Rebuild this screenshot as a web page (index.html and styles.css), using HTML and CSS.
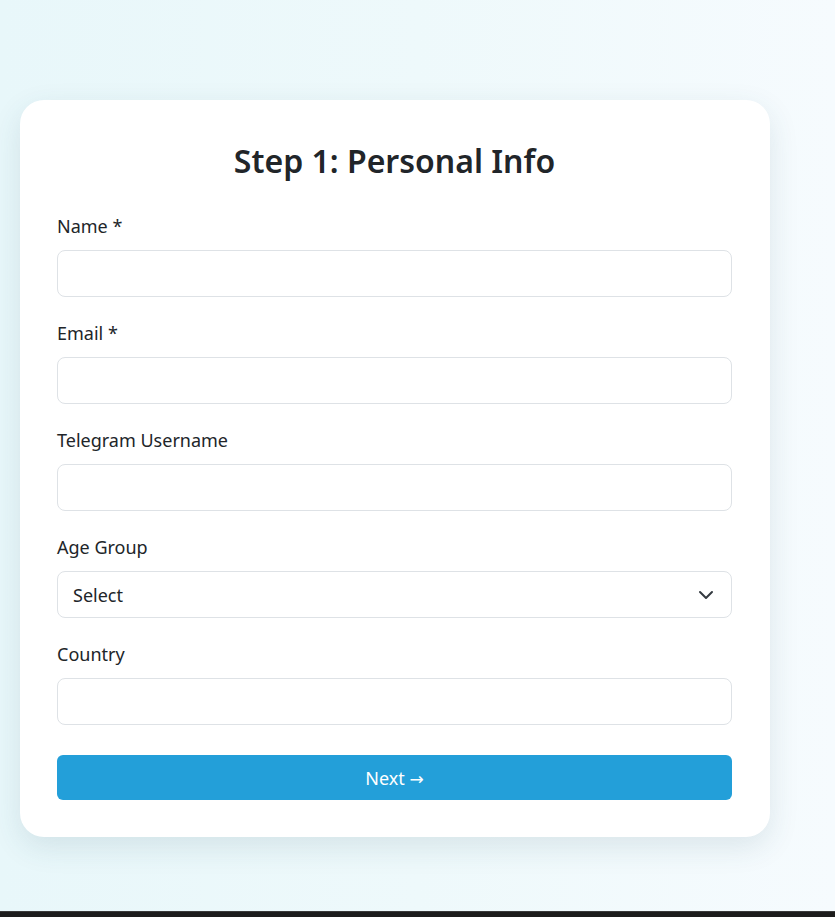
FILE: index.html
```html
<!DOCTYPE html>
<html lang="en">
<head>
<meta charset="utf-8">
<title>Step 1: Personal Info</title>
<link rel="stylesheet" href="styles.css">
</head>
<body>
<main class="page">
  <form class="card">
    <h1 class="title">Step 1: Personal Info</h1>
    <div class="field">
      <label class="label" for="name">Name *</label>
      <input class="input" id="name" type="text">
    </div>
    <div class="field">
      <label class="label" for="email">Email *</label>
      <input class="input" id="email" type="email">
    </div>
    <div class="field">
      <label class="label" for="tg">Telegram Username</label>
      <input class="input" id="tg" type="text">
    </div>
    <div class="field">
      <label class="label" for="age">Age Group</label>
      <div class="select-wrap">
        <select class="input select" id="age">
          <option>Select</option>
        </select>
        <svg class="chevron" width="16" height="16" viewBox="0 0 16 16" aria-hidden="true"><path d="M2 5l6 6 6-6" fill="none" stroke="#343a40" stroke-width="2" stroke-linecap="round" stroke-linejoin="round"/></svg>
      </div>
    </div>
    <div class="field">
      <label class="label" for="country">Country</label>
      <input class="input" id="country" type="text">
    </div>
    <button class="btn" type="button">Next <span class="arrow">→</span></button>
  </form>
</main>
<div class="taskbar"></div>
</body>
</html>
```
FILE: styles.css
```css
* { box-sizing: border-box; }
html, body { margin: 0; padding: 0; }
body {
  height: 917px;
  overflow: hidden;
  font-family: "Noto Sans", "Open Sans", sans-serif;
  color: #212529;
  background: linear-gradient(90deg, #e8f7fa 0%, #eef9fb 50%, #f6fbfe 100%);
  display: flex;
  flex-direction: column;
}
.page {
  flex: 1;
  padding: 100px 0 0 20px;
}
.card {
  width: 750px;
  background: #fff;
  border-radius: 24px;
  padding: 37px 38px 37px 37px;
  box-shadow: 0 10px 30px rgba(40, 80, 100, 0.12);
  display: flex;
  flex-direction: column;
}
.title {
  margin: 0 0 28px;
  font-size: 32px;
  line-height: 48px;
  font-weight: 600;
  text-align: center;
}
.field {
  display: flex;
  flex-direction: column;
  margin-bottom: 23px;
}
.label {
  font-size: 18px;
  line-height: 27px;
  margin-bottom: 10px;
}
.input {
  height: 47px;
  border: 1px solid #dee2e6;
  border-radius: 8px;
  padding: 0 15px;
  font: inherit;
  font-size: 18px;
  color: #212529;
  background: #fff;
  width: 100%;
}
.select-wrap { position: relative; }
.select {
  appearance: none;
  -webkit-appearance: none;
}
.chevron {
  position: absolute;
  right: 18px;
  top: 16px;
  pointer-events: none;
}
.btn {
  margin-top: 7px;
  height: 45px;
  border: 0;
  border-radius: 6px;
  background: #239fd9;
  color: #fff;
  font: inherit;
  font-size: 18px;
}
.arrow {
  font-family: "DejaVu Sans", sans-serif;
  font-size: 17px;
}
.taskbar {
  height: 6px;
  background: #1c1c1c;
  border-top: 1px solid #3a3a3a;
}
```
